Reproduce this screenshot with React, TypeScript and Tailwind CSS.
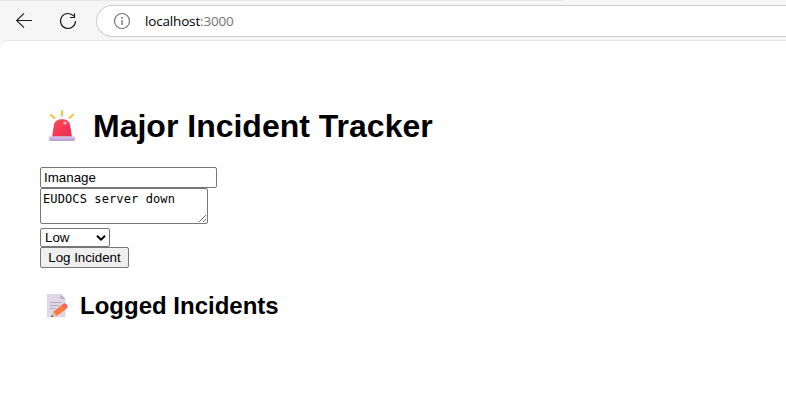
import { useState } from "react";

function BackIcon() {
  return (
    <svg className="h-5 w-5" viewBox="0 0 20 20" fill="none" stroke="#1b1b1b" strokeWidth="1.1">
      <path d="M18 10.5H2.5M10 3.3L2.6 10.5L10 17.7" />
    </svg>
  );
}

function ReloadIcon() {
  return (
    <svg className="h-5 w-5" viewBox="0 0 20 20" fill="none" stroke="#1b1b1b" strokeWidth="1.15">
      <path d="M15.8 5.2A7.5 7.5 0 1 0 17.5 10M16.5 2.2V6.5H12" />
    </svg>
  );
}

function InfoIcon() {
  return (
    <svg className="h-5 w-5" viewBox="0 0 20 20" fill="none" stroke="#757575" strokeWidth="1.2">
      <circle cx="10" cy="10" r="7.5" />
      <path d="M10 9V14" strokeWidth="1.4" />
      <path d="M10 6V7.7" strokeWidth="1.6" />
    </svg>
  );
}

function SirenIcon() {
  return (
    <svg className="h-8 w-7 shrink-0" viewBox="0 0 28 32">
      <defs>
        <linearGradient id="dome" x1="0" y1="0" x2="1" y2="1">
          <stop offset="0" stopColor="#f4525c" />
          <stop offset="0.55" stopColor="#fb3455" />
          <stop offset="1" stopColor="#dc3158" />
        </linearGradient>
        <linearGradient id="base" x1="0" y1="0" x2="0" y2="1">
          <stop offset="0" stopColor="#d7c9e6" />
          <stop offset="1" stopColor="#b69bd5" />
        </linearGradient>
      </defs>
      <g stroke="#fbc13d" strokeWidth="2" strokeLinecap="round">
        <path d="M2.8 5L6.3 8M14 1V5.5M24.9 4.7L21.5 8" />
      </g>
      <path
        d="M4 27L6 14.8C6.6 11 9.5 9.2 14 9.2S21.4 11 22 14.8L24 27Z"
        fill="url(#dome)"
      />
      <ellipse cx="17" cy="13" rx="1.9" ry="1.5" fill="#ffb0ba" />
      <rect x="1" y="26.3" width="26" height="4.7" rx="1.4" fill="url(#base)" />
    </svg>
  );
}

function MemoIcon() {
  return (
    <svg className="h-6 w-[22px] shrink-0" viewBox="0 0 22 24">
      <path d="M1 0H14.5L19.5 5V23.3H1Z" fill="#ded7e7" />
      <path d="M14.5 0L19.5 5H14.5Z" fill="#b9aec9" />
      <path d="M4 8.5H16M4 11.5H13M4 14.5H9.5" stroke="#b3abc0" strokeWidth="1" />
      <path d="M7.2 17.7L15.8 11L19.8 15.2L10.8 22Z" fill="#fa7a3d" />
      <path d="M15.5 11.2L17.7 9.6Q19 8.8 20.2 10L21.5 11.5Q22 12.7 21 13.8L19.5 15.2Z" fill="#f4675d" />
      <path d="M7.2 17.7L10.8 22L5 23.2Z" fill="#eeb88d" />
      <path d="M5.9 20.8L7.2 22.6L5 23.2Z" fill="#634354" />
    </svg>
  );
}

export default function App() {
  const [title, setTitle] = useState("Imanage");
  const [description, setDescription] = useState("EUDOCS server down");
  const [severity, setSeverity] = useState("Low");

  return (
    <div className="h-[407px] overflow-hidden bg-[#f6f6f6] font-['Liberation_Sans',Arial,sans-serif] text-black">
      <header className="h-10">
        <div className="h-px w-[564px] bg-[#e7e7e7]" />
        <div className="flex h-[39px] items-start pt-1">
          <button className="mt-[5px] ml-3.5" aria-label="Back"><BackIcon /></button>
          <button className="mt-1.5 ml-6" aria-label="Reload"><ReloadIcon /></button>
          <div className="ml-[18px] flex h-8 flex-1 items-center rounded-l-full border border-r-0 border-[#cecece] bg-white pl-[15px]">
            <InfoIcon />
            <span className="ml-[13px] font-['Open_Sans','Noto_Sans',sans-serif] text-[13.5px] leading-5 tracking-[-0.17px]">
              localhost<span className="text-[#757575]">:3000</span>
            </span>
          </div>
        </div>
      </header>
      <main className="h-[367px] rounded-tl-lg border-t border-[#e7e7e7] bg-white pt-[67px] pl-10">
        <h1 className="flex h-[37px] items-center text-[32px] leading-[37px] font-bold">
          <span className="mr-[17px] mb-px ml-2"><SirenIcon /></span>
          Major Incident Tracker
        </h1>
        <form className="mt-[22px] flex flex-col items-start" onSubmit={(e) => e.preventDefault()}>
          <input
            className="h-[21px] w-[177px] rounded-[2px] border border-[#767676] bg-white px-[3px] text-[13.333px] leading-[15px] outline-none"
            value={title}
            onChange={(e) => setTitle(e.target.value)}
          />
          <textarea
            className="h-9 w-[168px] resize overflow-hidden rounded-[2px] border border-[#767676] bg-white px-0.5 py-[3px] font-['DejaVu_Sans_Mono',monospace] text-[12px] leading-[15px] tracking-[0.11px] outline-none"
            value={description}
            onChange={(e) => setDescription(e.target.value)}
          />
          <div className="mt-1 grid h-[19px] w-[70px]">
            <select
              className="col-start-1 row-start-1 h-[19px] w-[70px] appearance-none rounded-[2px] border border-[#767676] bg-white pl-1 text-[13.333px] leading-[15px] outline-none"
              value={severity}
              onChange={(e) => setSeverity(e.target.value)}
            >
              <option>Low</option>
              <option>Medium</option>
              <option>High</option>
            </select>
            <svg className="pointer-events-none col-start-1 row-start-1 mr-1 h-2.5 w-2.5 self-center justify-self-end" viewBox="0 0 10 10" fill="none" stroke="#000" strokeWidth="2">
              <path d="M1 2.7L5 6.7L9 2.7" />
            </svg>
          </div>
          <button className="h-[21px] w-[89px] rounded-[2px] border border-[#767676] bg-[#efefef] text-center text-[13.333px] leading-[15px] tracking-[-0.03px] whitespace-nowrap">
            Log Incident
          </button>
        </form>
        <h2 className="mt-6 flex h-7 items-center text-2xl leading-7 font-bold">
          <span className="mr-3 mb-px ml-1.5"><MemoIcon /></span>
          Logged Incidents
        </h2>
      </main>
    </div>
  );
}
